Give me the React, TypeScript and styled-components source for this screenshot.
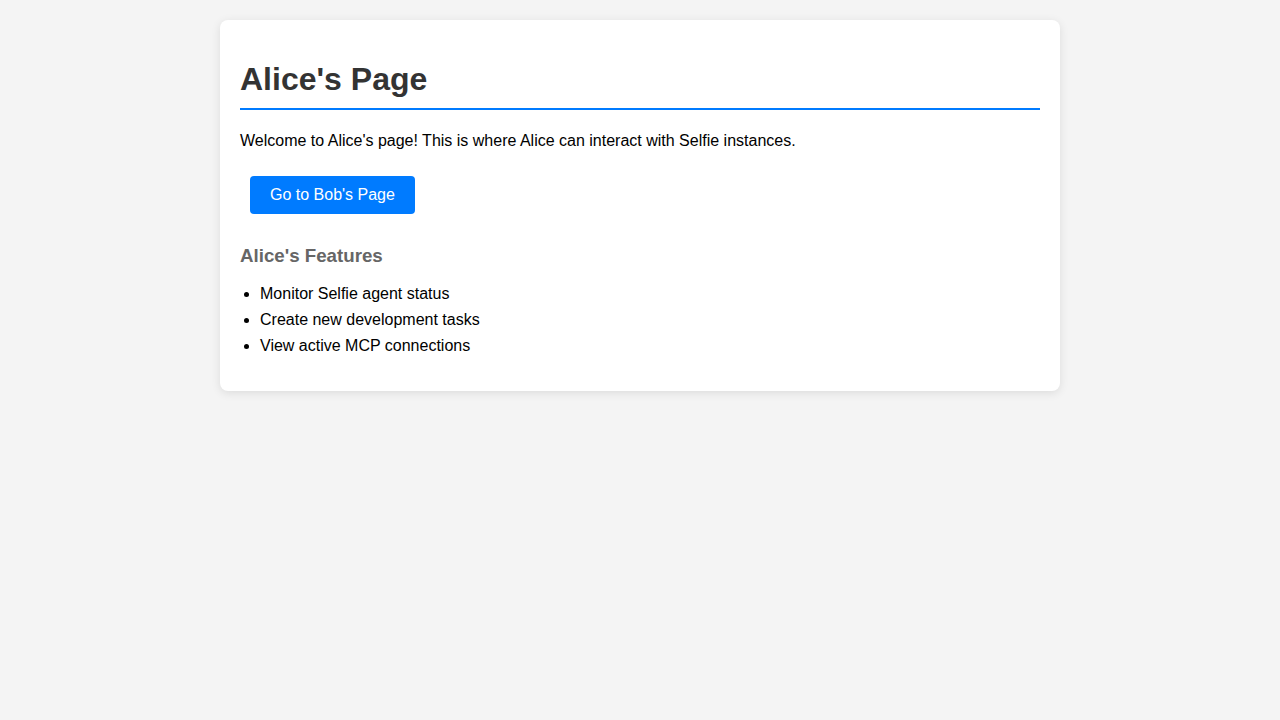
import React from "react";
import styled, { createGlobalStyle } from "styled-components";

const Global = createGlobalStyle`
  html, body { margin: 0; padding: 0; }
  body {
    background: #f4f4f4;
    font-family: "Liberation Sans", Arial, sans-serif;
    color: #000;
  }
`;

const Page = styled.div`
  padding: 20px;
`;

const Card = styled.div`
  width: 800px;
  margin: 0 auto;
  background: #fff;
  padding: 20px;
  border-radius: 8px;
  box-shadow: 0 2px 10px rgba(0, 0, 0, 0.1);
`;

const Title = styled.h1`
  font-size: 32px;
  font-weight: bold;
  color: #333;
  margin: 21.44px 0;
  padding-bottom: 10px;
  border-bottom: 2px solid #007bff;
`;

const Text = styled.p`
  font-size: 16px;
  margin: 16px 0;
`;

const Actions = styled.div`
  padding-bottom: 2px;
`;

const Button = styled.button`
  display: inline-block;
  margin: 10px;
  padding: 10px 20px;
  background: #007bff;
  color: #fff;
  border: none;
  border-radius: 4px;
  font-family: "Liberation Sans", Arial, sans-serif;
  font-size: 16px;
  line-height: normal;
  cursor: pointer;
`;

const SubTitle = styled.h3`
  font-size: 18.72px;
  font-weight: bold;
  color: #666;
  margin: 18.72px 0;
`;

const List = styled.ul`
  margin: 16px 0;
  padding-left: 20px;
`;

const Item = styled.li`
  font-size: 16px;
  margin-bottom: 8px;
`;

export default function App() {
  return (
    <>
      <Global />
      <Page>
        <Card>
          <Title>Alice's Page</Title>
          <Text>Welcome to Alice's page! This is where Alice can interact with Selfie instances.</Text>
          <Actions>
            <Button>Go to Bob's Page</Button>
          </Actions>
          <SubTitle>Alice's Features</SubTitle>
          <List>
            <Item>Monitor Selfie agent status</Item>
            <Item>Create new development tasks</Item>
            <Item>View active MCP connections</Item>
          </List>
        </Card>
      </Page>
    </>
  );
}
